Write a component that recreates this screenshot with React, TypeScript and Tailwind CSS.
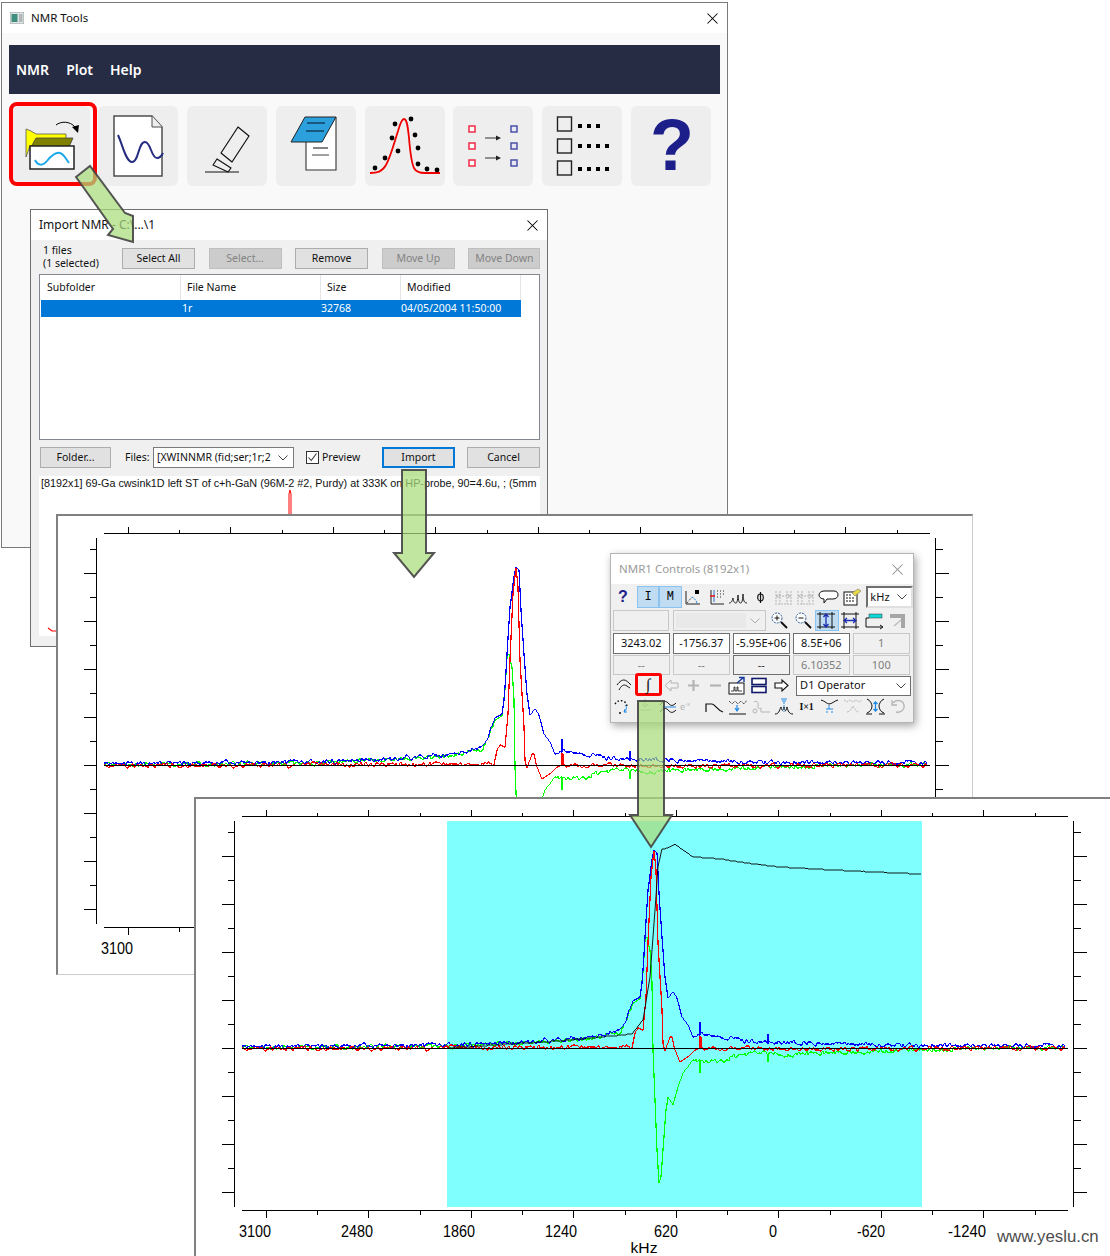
import React from "react";

type P = [number, number];

function rng(seed: number) {
  let s = seed;
  return () => {
    s = (s * 1664525 + 1013904223) % 4294967296;
    return s / 4294967296;
  };
}

function trace(pts: P[], amp: (x: number) => number, seed: number, spikes: P[] = []) {
  const r = rng(seed);
  let d = "";
  let i = 0;
  let prev = 0;
  for (let x = pts[0][0]; x <= pts[pts.length - 1][0]; x += 1) {
    while (i < pts.length - 2 && x > pts[i + 1][0]) i++;
    const [a, b] = pts[i];
    const [c, e] = pts[i + 1];
    let y = b + ((e - b) * (x - a)) / (c - a);
    const n = (r() - 0.5) * 2 * amp(x);
    prev = prev * 0.45 + n * 0.75;
    y += prev;
    const sp = spikes.find((s) => s[0] === x);
    const yy = Math.round(y);
    d += `${d ? "L" : "M"}${x - 195} ${yy - 798}`;
    if (sp) d += `L${x - 195} ${sp[1] - 798}L${x - 195} ${yy - 798}`;
  }
  return d;
}

const noisy = (x: number) => (x < 632 || x > 695 ? 2.6 : 0.2);

const shoulderA: P[] = [
  [560, 1040], [593, 1037], [610, 1032], [620, 1029], [627, 1018], [633, 1001], [640, 997], [642, 983], [643, 970],
  [645, 937], [648, 890], [652, 860], [654, 850],
];

const bluePts: P[] = [
  [242, 1047], [450, 1045], ...shoulderA,
  [657, 853], [659, 893], [662, 937], [665, 977], [668, 998], [673, 992], [677, 998], [682, 1017], [688, 1025], [693, 1037],
  [700, 1033], [727, 1038], [760, 1042], [780, 1042], [900, 1045], [1065, 1046],
];
const redPts: P[] = [
  [242, 1049], [632, 1047], [635, 1033], [638, 1028], [643, 1030], [646, 997], [648, 943], [651, 877], [654, 851],
  [656, 870], [658, 943], [662, 1010], [663, 1043], [665, 1051], [670, 1037], [672, 1037], [675, 1050], [680, 1062],
  [688, 1057], [697, 1048], [780, 1049], [1065, 1048],
];
const greenPts: P[] = [
  [242, 1048], [450, 1046], [560, 1041], [593, 1038], [610, 1033], [620, 1032], [627, 1019], [633, 1003], [640, 999],
  [643, 972], [645, 940], [647, 937], [650, 950], [652, 983], [653, 1050], [655, 1100], [657, 1150], [659, 1183],
  [661, 1177], [663, 1150], [666, 1110], [668, 1097], [673, 1105], [678, 1087], [683, 1073], [693, 1060], [700, 1062],
  [717, 1062], [740, 1055], [760, 1053], [780, 1055], [900, 1050], [1065, 1047],
];
const integralPts: P[] = [
  [447, 1048], [560, 1041], [632, 1034], [643, 1020], [650, 977], [655, 910], [658, 867], [662, 849], [668, 848],
  [675, 844], [683, 850], [693, 857], [720, 859], [747, 863], [780, 867], [850, 871], [921, 874],
];

const blueD = trace(bluePts, noisy, 11, [[700, 1022], [768, 1034]]);
const redD = trace(redPts, noisy, 23, [[700, 1036], [701, 1037]]);
const greenD = trace(greenPts, noisy, 37, [[700, 1073], [768, 1062]]);
const integralD = trace(integralPts, () => 0.15, 5);

const majorX = [71, 173.5, 276, 378.5, 481, 583.5, 686, 788.5];
const minorX = [122, 225, 327, 430, 532, 635, 737, 840];
const majorY = [58, 106, 154, 202, 250, 298, 346, 394];
const minorY = [34, 82, 130, 178, 226, 274, 322, 370];
const labels: [string, number, number][] = [
  ["3100", 60, 32], ["2480", 162, 32], ["1860", 264, 32], ["1240", 366, 32],
  ["620", 471, 24], ["0", 578, 8], ["-620", 676, 28], ["-1240", 772, 38],
];

function PlotWindow({ integrated, className }: { integrated?: boolean; className: string }) {
  return (
    <div className={`absolute w-[917px] h-[461px] bg-white overflow-hidden border-l-2 border-t-2 border-[#808080] ${className}`}>
      <svg width={915} height={459} viewBox="1 1 915 459" className="block">
        {integrated && <rect x={252} y={23} width={475} height={386} fill="#80ffff" />}
        <g stroke="#000" strokeWidth={1} shapeRendering="crispEdges" fill="none">
          <path d="M47 18.5H873M47 412.5H873M39.5 23V409M878.5 23V409" />
          {majorX.map((x) => (
            <path key={x} d={`M${x} 11.5V19M${x} 412V419.5`} />
          ))}
          {minorX.map((x) => (
            <path key={x} d={`M${x} 14.5V19M${x} 412V416.5`} />
          ))}
          {majorY.map((y) => (
            <path key={y} d={`M27 ${y}H40M879 ${y}H892`} />
          ))}
          {minorY.map((y) => (
            <path key={y} d={`M33 ${y}H40M879 ${y}H886`} />
          ))}
        </g>
        <g fill="none" strokeWidth={1.2} strokeLinejoin="round" shapeRendering="crispEdges">
          <path d={greenD} stroke="#00ff00" />
          <path d={blueD} stroke="#0000ff" />
          <path d={redD} stroke="#ff0000" />
          {integrated && <path d={integralD} stroke="#000" strokeWidth={0.9} />}
        </g>
        <path d="M47 250.5H873" stroke="#000" strokeWidth={1} shapeRendering="crispEdges" />
        <g fontFamily="'Liberation Sans',sans-serif" fontSize={16} fill="#000">
          {labels.map(([t, x, w]) => (
            <text key={t} x={x} y={439} textAnchor="middle" textLength={w} lengthAdjust="spacingAndGlyphs">
              {t}
            </text>
          ))}
          <text x={449} y={455} fontSize={15} textAnchor="middle" textLength={27} lengthAdjust="spacingAndGlyphs">
            kHz
          </text>
        </g>
      </svg>
    </div>
  );
}

function CloseX({ color = "#000", size = 11 }: { color?: string; size?: number }) {
  return (
    <svg width={size} height={size} viewBox="0 0 11 11">
      <path d="M0.5 0.5L10.5 10.5M10.5 0.5L0.5 10.5" stroke={color} strokeWidth={1.05} fill="none" />
    </svg>
  );
}

function Tile({ children }: { children: React.ReactNode }) {
  return <div className="w-20 h-20 rounded-md bg-[#eeeeee] flex items-center justify-center shrink-0">{children}</div>;
}

function S80({ children }: { children: React.ReactNode }) {
  return (
    <svg width={80} height={80} viewBox="0 0 80 80" fill="none" className="block">
      {children}
    </svg>
  );
}

const dots5: P[] = [[10, 62], [20, 52], [27, 32], [30, 18], [33, 45], [46, 13], [50, 29], [53, 42], [53, 58], [62, 63], [72, 64]];

function Tiles() {
  return (
    <div className="flex gap-[8.8px] ml-[7.5px] mt-3">
      <Tile>
        <S80>
          <path d="M16 23L21 25L26 28H56V40H20L16 51Z" fill="#ffff00" stroke="#555" strokeWidth={0.8} />
          <path d="M26 32H63L59 41H21Z" fill="#808000" stroke="#444" strokeWidth={0.8} />
          <rect x={20} y={40} width={44} height={23} fill="#fff" stroke="#222" strokeWidth={1.5} />
          <path d="M25 54C28 60 33 60 37 55C41 50 45 46 50 47C54 48 56 53 59 57" stroke="#1da8ea" strokeWidth={2} />
          <path d="M46 19C51 15 60 15 65 21" stroke="#000" strokeWidth={1} />
          <path d="M62 21L69 19L68 27Z" fill="#000" />
        </S80>
      </Tile>
      <Tile>
        <S80>
          <path d="M16 10H54L64 21V70H16Z" fill="#fff" stroke="#4d4d4d" strokeWidth={1.5} />
          <path d="M54 10V21H64" fill="#eee" stroke="#4d4d4d" strokeWidth={1} />
          <path d="M20 29C25 40 28 56 34 56C41 56 40 36 47 36C53 36 53 52 59 52C62 52 64 49 65 47" stroke="#252c80" strokeWidth={2} />
        </S80>
      </Tile>
      <Tile>
        <S80>
          <path d="M51 21L62 30L45 56L34 47Z" stroke="#111" strokeWidth={1.2} strokeLinejoin="round" />
          <path d="M30 53L44 62L41 66L26 59Z" stroke="#111" strokeWidth={1.2} strokeLinejoin="round" />
          <path d="M18 66H52" stroke="#111" strokeWidth={1.1} />
        </S80>
      </Tile>
      <Tile>
        <S80>
          <path d="M30 36V64H60V11" fill="#fff" stroke="#333" strokeWidth={1.1} />
          <path d="M29 11H60L46 36H15Z" fill="#2ba0dd" stroke="#222" strokeWidth={1} />
          <path d="M31 17H49M30 25H48" stroke="#12405f" strokeWidth={1.4} />
          <path d="M37 42H52" stroke="#333" strokeWidth={1.2} />
          <path d="M36 49H53" stroke="#777" strokeWidth={1.4} />
        </S80>
      </Tile>
      <Tile>
        <S80>
          <path d="M5 67C12 67 17 66 21 59C26 50 30 34 33 25C35 18 37 13 39 13C42 13 43 22 44 32C45 44 46 56 49 62C51 66 54 67 60 67H75" stroke="#f00000" strokeWidth={1.8} />
          {dots5.map(([x, y]) => (
            <circle key={`${x}-${y}`} cx={x} cy={y} r={2.4} fill="#000" />
          ))}
        </S80>
      </Tile>
      <Tile>
        <S80>
          {[23, 40, 57].map((y) => (
            <rect key={`r${y}`} x={16} y={y - 3} width={6} height={6} fill="#fff" stroke="#ee2a44" strokeWidth={1.5} />
          ))}
          {[23, 40, 57].map((y) => (
            <rect key={`b${y}`} x={58} y={y - 3} width={6} height={6} fill="#e8e8f5" stroke="#4a52a8" strokeWidth={1.5} />
          ))}
          <path d="M32 32H44M32 52H44" stroke="#333" strokeWidth={1.2} />
          <path d="M43 29.5L48 32L43 34.5ZM43 49.5L48 52L43 54.5Z" fill="#222" />
        </S80>
      </Tile>
      <Tile>
        <S80>
          {[11, 33, 55].map((y) => (
            <rect key={y} x={15.5} y={y} width={14} height={14} fill="#eee" stroke="#222" strokeWidth={1.4} />
          ))}
          {[38, 47, 56].map((x) => (
            <rect key={x} x={x - 2} y={18} width={4} height={4} fill="#000" />
          ))}
          {[38, 47, 56, 65].map((x) => (
            <rect key={x} x={x - 2} y={38} width={4} height={4} fill="#000" />
          ))}
          {[38, 47, 56, 65].map((x) => (
            <rect key={x} x={x - 2} y={61} width={4} height={4} fill="#000" />
          ))}
        </S80>
      </Tile>
      <Tile>
        <span className="font-['Liberation_Sans'] font-bold text-[72px] leading-none text-[#1c1f8a] -mt-[3px] ml-[2px]">?</span>
      </Tile>
    </div>
  );
}

function Btn({ children, w, off, focus }: { children: React.ReactNode; w: string; off?: boolean; focus?: boolean }) {
  const tone = off
    ? "bg-[#cccccc] border-[#bfbfbf] text-[#838383]"
    : focus
      ? "bg-[#e1e1e1] border-[#0078d7] border-2 text-[#111]"
      : "bg-[#e1e1e1] border-[#adadad] text-[#111]";
  return <div className={`h-[21px] border flex items-center justify-center pt-px text-[10.5px] shrink-0 ${w} ${tone}`}>{children}</div>;
}

function Chevron({ color = "#444" }: { color?: string }) {
  return (
    <svg width={10} height={6} viewBox="0 0 10 6" className="shrink-0">
      <path d="M0.5 0.5L5 5L9.5 0.5" stroke={color} fill="none" strokeWidth={1} />
    </svg>
  );
}

function ImportDialog() {
  return (
    <div className="absolute left-[30px] top-[209px] w-[518px] h-[438px] border border-[#6f6f6f] bg-[#f0f0f0]">
      <div className="h-[30px] bg-white flex items-center justify-between pl-2 pr-[9px]">
        <span className="text-[12px] text-[#111]">Import NMR - C:\...\1</span>
        <CloseX />
      </div>
      <div className="flex mt-2 items-center h-[21px]">
        <div className="ml-3 w-[79px] shrink-0 text-[10.5px] leading-[13px] text-[#111] -mt-1">
          <div>1 files</div>
          <div>(1 selected)</div>
        </div>
        <div className="flex gap-[13.6px]">
          <Btn w="w-[73px]">Select All</Btn>
          <Btn w="w-[73px]" off>Select...</Btn>
          <Btn w="w-[73px]">Remove</Btn>
          <Btn w="w-[73px]" off>Move Up</Btn>
          <Btn w="w-[72px]" off>Move Down</Btn>
        </div>
      </div>
      <div className="ml-2 mt-[5px] w-[501px] h-[166px] border border-[#828790] bg-white pl-px">
        <div className="flex h-[25px] text-[10.5px] text-[#111]">
          <div className="w-[140px] pl-[6px] pt-px border-r border-[#e5e5e5] h-full flex items-center">Subfolder</div>
          <div className="w-[140px] pl-[6px] pt-px border-r border-[#e5e5e5] h-full flex items-center">File Name</div>
          <div className="w-[80px] pl-[6px] pt-px border-r border-[#e5e5e5] h-full flex items-center">Size</div>
          <div className="w-[120px] pl-[6px] pt-px border-r border-[#e5e5e5] h-full flex items-center">Modified</div>
        </div>
        <div className="flex h-[17px] w-[480px] bg-[#0078d7] items-center pt-px text-[10.5px] text-white">
          <div className="w-[141px]" />
          <div className="w-[139px]">1r</div>
          <div className="w-[80px]">32768</div>
          <div>04/05/2004 11:50:00</div>
        </div>
      </div>
      <div className="flex items-center ml-[9px] mt-[7px] h-[21px]">
        <Btn w="w-[71px]">Folder...</Btn>
        <span className="ml-[14px] w-[28px] pt-px text-[10.5px] text-[#111]">Files:</span>
        <div className="w-[141px] h-[21px] border border-[#7a7a7a] bg-white flex items-center justify-between pl-[3px] pt-px pr-[5px] text-[10.5px] text-[#111] overflow-hidden whitespace-nowrap">
          <span>[XWINNMR (fid;ser;1r;2</span>
          <Chevron />
        </div>
        <svg width={13} height={13} viewBox="0 0 13 13" className="ml-3 shrink-0">
          <rect x={0.5} y={0.5} width={12} height={12} fill="#fff" stroke="#333" />
          <path d="M2.5 6.5L5.2 9.5L10.5 2.5" stroke="#333" fill="none" strokeWidth={1.1} />
        </svg>
        <span className="ml-[3px] w-[60px] pt-px text-[10.5px] text-[#111]">Preview</span>
        <Btn w="w-[73px]" focus>Import</Btn>
        <div className="ml-3">
          <Btn w="w-[73px]">Cancel</Btn>
        </div>
      </div>
      <div className="relative ml-2 mt-2 w-[501px] h-[160px] bg-white overflow-hidden">
        <div className="pl-[2px] font-['Liberation_Sans'] text-[10.8px] leading-[14px] text-[#111] whitespace-nowrap">
          [8192x1] 69-Ga cwsink1D left ST of c+h-GaN (96M-2 #2, Purdy) at 333K on HP-probe, 90=4.6u, ; (5mm
        </div>
        <svg width={501} height={160} className="absolute left-0 top-0" fill="none">
          <path d="M250 40V18L251 14L252 18V40" stroke="#f00" strokeWidth={1} />
          <path d="M9 152L13 155H17" stroke="#f00" strokeWidth={1.2} />
        </svg>
      </div>
    </div>
  );
}

function Ic({ w = "w-[22.6px]", children, box }: { w?: string; children: React.ReactNode; box?: boolean }) {
  return (
    <div className={`h-full flex items-center justify-center shrink-0 ${w} ${box ? "bg-[#bfdcf3] border border-[#8cc3ee]" : ""}`}>
      <svg width={21} height={19} viewBox="0 0 21 19" fill="none" className="block">
        {children}
      </svg>
    </div>
  );
}

function Field({ children, w, kind }: { children?: React.ReactNode; w: string; kind: "on" | "off" | "dark" }) {
  const cls =
    kind === "on"
      ? "border-[#6f6f6f] bg-white text-[#111]"
      : kind === "dark"
        ? "border-[#6f6f6f] bg-[#f0f0f0] text-[#333]"
        : "border-[#c8c8c8] bg-[#f0f0f0] text-[#7d7d7d]";
  return <div className={`h-full border text-[11px] flex items-center justify-center overflow-hidden whitespace-nowrap shrink-0 ${w} ${cls}`}>{children}</div>;
}

const G = "#b4b4b4";

function Controls() {
  return (
    <div className="absolute left-[610px] top-[553px] w-[304px] h-[170px] border border-[#b5b5b5] bg-[#f0f0f0] shadow-[2px_3px_8px_rgba(0,0,0,0.35)]">
      <div className="h-[30px] bg-white flex items-center justify-between pl-2 pr-[10px]">
        <span className="text-[11.5px] text-[#9a9a9a]">NMR1 Controls (8192x1)</span>
        <CloseX color="#8e8e8e" />
      </div>
      {/* row 1 */}
      <div className="flex h-[22px] mt-[2px] pl-px items-center">
        <div className="w-[22px] h-full flex items-center justify-center font-['Liberation_Sans'] font-bold text-[16px] text-[#1c1f8a]">?</div>
        <div className="ml-[3px] w-[22.6px] h-full bg-[#bfdcf3] border border-[#8cc3ee] flex items-center justify-center font-['Liberation_Mono'] text-[12px] text-[#000]">I</div>
        <div className="w-[22.6px] h-full bg-[#bfdcf3] border border-[#8cc3ee] flex items-center justify-center font-['Liberation_Mono'] text-[12px] text-[#000]">M</div>
        <Ic>
          <path d="M4 3V16H18" stroke="#222" />
          <path d="M5 15L10 9" stroke="#222" strokeDasharray="1 1" />
          <path d="M10 9C12 10 14 12 15 15" stroke="#1e88e5" strokeDasharray="2 1" />
          <rect x={13} y={2} width={4} height={4} fill="#000" />
        </Ic>
        <Ic>
          <path d="M6 2V16H19" stroke="#222" />
          <path d="M9 2V14" stroke="#1e6fd0" />
          <path d="M5 8H10" stroke="#e11" strokeWidth={1.5} />
          <path d="M12 3h1M15 3h1M18 3h1M12 6h1M15 6h1M18 6h1M12 9h1M15 9h1" stroke="#222" />
        </Ic>
        <Ic>
          <path d="M1 15C3 15 4 14 5 10C5.5 14 6.5 15 8 15C9 15 9.5 13 10 7C10.5 13 11 15 12.5 15C14 15 14.5 13 15 6C15.5 13 16 15 19 15" stroke="#222" />
        </Ic>
        <Ic>
          <ellipse cx={10.5} cy={9.5} rx={2.8} ry={3.5} stroke="#111" strokeWidth={1.2} />
          <path d="M10.5 4V15" stroke="#111" strokeWidth={1.2} />
        </Ic>
        <Ic>
          <path d="M3 3V14M18 3V14M3 8H18M7 6L3 8L7 10M14 6L18 8L14 10M7 3V16M14 3V16M2 16H19" stroke={G} strokeDasharray="2 1" />
        </Ic>
        <Ic>
          <path d="M3 3V14M18 3V14M3 8H18M7 6L3 8L7 10M14 6L18 8L14 10M7 3V16M14 3V16M2 16H19" stroke={G} strokeDasharray="2 1" />
        </Ic>
        <Ic>
          <path d="M6 3H16C19 3 20 5 20 7C20 9 18 11 15 11H9L6 15V11C3 11 1 9 1 7C1 5 3 3 6 3Z" stroke="#111" fill="#fff" />
        </Ic>
        <Ic>
          <rect x={3} y={4} width={13} height={13} fill="#fff" stroke="#111" />
          <path d="M5 7h6M5 10h9M5 13h9" stroke="#111" strokeDasharray="2 1" />
          <path d="M11 5L17 1L20 3L14 8Z" fill="#e8d94a" stroke="#776" strokeWidth={0.6} />
        </Ic>
        <div className="ml-[4px] w-[47px] h-[22px] border-2 border-t-[#6f6f6f] border-l-[#6f6f6f] border-r-[#e0e0e0] border-b-[#e0e0e0] bg-white flex items-center justify-between pl-[2px] pr-[4px] text-[11px] text-[#111]">
          <span>kHz</span>
          <Chevron />
        </div>
      </div>
      {/* row 2 */}
      <div className="flex h-[21px] mt-[2px] pl-[2px] items-center">
        <Field w="w-[56px]" kind="off" />
        <div className="ml-1 w-[93px] h-full border border-[#c8c8c8] bg-[#f0f0f0] flex items-center justify-between p-[2px] pr-[5px]">
          <div className="w-[70px] h-full bg-[#e9e9e9]" />
          <Chevron color="#aaa" />
        </div>
        <div className="ml-[2px] flex h-full">
          <Ic w="w-[23.5px]">
            <circle cx={8} cy={7} r={5} fill="#fff" stroke="#2b5d9a" strokeDasharray="2 1" />
            <path d="M5.5 7H10.5M8 4.5V9.5" stroke="#111" />
            <path d="M12 11L18 17" stroke="#111" strokeWidth={2} />
          </Ic>
          <Ic w="w-[23.5px]">
            <circle cx={8} cy={7} r={5} fill="#fff" stroke="#2b5d9a" strokeDasharray="2 1" />
            <path d="M5.5 7H10.5" stroke="#111" />
            <path d="M12 11L18 17" stroke="#111" strokeWidth={2} />
          </Ic>
          <Ic w="w-[23.5px]" box>
            <path d="M4 1V18M16 1V18M1 3H19M1 16H19" stroke="#111" />
            <path d="M10 3V16M7.5 6L10 3L12.5 6M7.5 13L10 16L12.5 13" stroke="#1a2cb0" strokeWidth={1.3} />
          </Ic>
          <Ic w="w-[23.5px]">
            <path d="M4 1V18M16 1V18M1 3H19M1 16H19" stroke="#111" />
            <path d="M4 9.5H16M7 7L4 9.5L7 12M13 7L16 9.5L13 12" stroke="#1a2cb0" strokeWidth={1.3} />
          </Ic>
          <Ic w="w-[23.5px]">
            <rect x={6} y={3} width={13} height={4} fill="#10d8d8" stroke="#333" strokeWidth={0.5} />
            <path d="M3 7V16H19" stroke="#111" />
            <path d="M3 7H6" stroke="#111" />
            <path d="M17 14L20 16L17 18" stroke="#111" />
          </Ic>
          <Ic w="w-[23.5px]">
            <path d="M3 3H18V17H14V7H3Z" fill="#a6a6a6" />
            <path d="M7 15L14 9" stroke="#bdbdbd" strokeWidth={1.5} />
          </Ic>
        </div>
      </div>
      {/* row 3 */}
      <div className="flex h-[21px] mt-[2px] pl-[2px] gap-[3.5px]">
        <Field w="w-[56.5px]" kind="on">3243.02</Field>
        <Field w="w-[56.5px]" kind="on">-1756.37</Field>
        <Field w="w-[56.5px]" kind="on">-5.95E+06</Field>
        <Field w="w-[56.5px]" kind="on">8.5E+06</Field>
        <Field w="w-[56.5px]" kind="off">1</Field>
      </div>
      {/* row 4 */}
      <div className="flex h-[20px] mt-px pl-[2px] gap-[3.5px]">
        <Field w="w-[56.5px]" kind="off">--</Field>
        <Field w="w-[56.5px]" kind="off">--</Field>
        <Field w="w-[56.5px]" kind="dark">--</Field>
        <Field w="w-[56.5px]" kind="off">6.10352</Field>
        <Field w="w-[56.5px]" kind="off">100</Field>
      </div>
      {/* row 5 */}
      <div className="flex h-[21px] pl-px items-center">
        <Ic w="w-[24px]">
          <path d="M3 9C6 5 8 4 10 4C12 4 14 6 17 9" stroke="#111" />
          <path d="M5 14C7 10 9 9 10.5 9C12 9 14 11 16 12" stroke="#111" />
        </Ic>
        <div className="w-[24px] h-[23px] flex items-center justify-center shrink-0 -mt-[2px]">
          <span className="w-[27px] h-[23px] shrink-0 border-[3px] border-[#ff0000] rounded-[3px] bg-[#f0f0f0] flex items-center justify-center font-['Liberation_Serif'] text-[16px] leading-none text-[#111]">∫</span>
        </div>
        <Ic w="w-[22px]">
          <path d="M4 9.5L10 4V7H17V12H10V15Z" stroke={G} fill="#f0f0f0" />
        </Ic>
        <Ic w="w-[22px]">
          <path d="M10.5 4V15M5 9.5H16" stroke={G} strokeWidth={2.2} />
        </Ic>
        <Ic w="w-[22px]">
          <path d="M5 9.5H16" stroke={G} strokeWidth={2.2} />
        </Ic>
        <Ic w="w-[22px]">
          <rect x={2} y={7} width={15} height={11} fill="#fff" stroke="#111" />
          <path d="M4 15H7V11H8V15H10V11H11V15H15" stroke="#111" strokeWidth={0.8} />
          <path d="M10 7L16 2M12 1.5H17V6" stroke="#173a9a" strokeWidth={1.4} />
        </Ic>
        <Ic w="w-[22px]">
          <rect x={3} y={2.5} width={14} height={6} fill="#fff" stroke="#111a6a" strokeWidth={1.6} />
          <rect x={3} y={10.5} width={14} height={6} fill="#fff" stroke="#111a6a" strokeWidth={1.6} />
        </Ic>
        <Ic w="w-[22px]">
          <path d="M17 9.5L11 4V7H4V12H11V15Z" stroke="#111" fill="#fff" strokeWidth={1.1} />
        </Ic>
        <div className="ml-1 w-[115px] h-[20px] border border-[#6f6f6f] bg-white flex items-center justify-between pl-[3px] pr-1 text-[11px] text-[#111] tracking-[0.1px]">
          <span>D1 Operator</span>
          <Chevron />
        </div>
      </div>
      {/* row 6 */}
      <div className="flex h-[21px] items-center">
        <Ic w="w-[23px]">
          <path d="M3 7C5 4 8 3 11 4C14 5 15 8 15 10" stroke="#111" strokeDasharray="1.5 2" strokeWidth={1.5} />
          <path d="M13 8C15 10 15 13 12 15M12 15L13 12M12 15L15 15" stroke="#1e88e5" />
          <path d="M7 16h2" stroke="#111" strokeWidth={1.5} />
        </Ic>
        <Ic w="w-[23px]">
          <path d="M10 2V9M7 7L10 10L13 7M5 13H16" stroke={G} />
        </Ic>
        <Ic w="w-[23px]">
          <path d="M2 8C5 4 8 3 11 7C13 9 15 9 18 6M2 15C5 11 8 10 11 14C13 16 15 16 18 13" stroke="#111" />
          <path d="M4 10H18" stroke="#1e88e5" />
        </Ic>
        <div className="w-[23px] h-full flex items-center justify-start shrink-0 text-[9px] text-[#b4b4b4]">
          e<sup className="text-[6px]">-x</sup>
        </div>
        <Ic w="w-[23px]">
          <path d="M2 15V7H8C11 7 13 13 19 15" stroke="#111" strokeWidth={1.2} />
        </Ic>
        <Ic w="w-[23px]">
          <path d="M2 4L5 7L8 4L11 7L14 4L17 7L20 3" stroke="#111" strokeDasharray="1 1" />
          <path d="M10 8V13M8 11L10 14L12 11" stroke="#1e88e5" strokeWidth={1.2} />
          <path d="M2 17H19" stroke="#111" />
        </Ic>
        <Ic w="w-[23px]">
          <path d="M4 5C7 3 9 6 8 9C7 11 9 12 11 11V15H20" stroke={G} />
          <circle cx={5} cy={14} r={2} stroke={G} />
        </Ic>
        <Ic w="w-[23px]">
          <path d="M2 17C6 17 6 14 8 10C9 14 10 15 11 10C12 15 13 15 14 10C15 14 16 17 20 17" stroke="#111" />
          <path d="M8 2H14M9 4h4" stroke="#1e88e5" />
          <path d="M11 5V15" stroke="#1e88e5" strokeDasharray="2 1" />
        </Ic>
        <div className="w-[23px] h-full flex items-center justify-center shrink-0 font-['Liberation_Serif'] font-bold text-[10px] tracking-[-0.2px] text-[#111]">I×1</div>
        <Ic w="w-[23px]">
          <path d="M2 3C6 4 8 7 10 7C13 7 15 4 19 3" stroke="#111" />
          <path d="M10 8V12M7 12H14M7 15H9M12 15H14" stroke="#1e88e5" />
        </Ic>
        <Ic w="w-[23px]">
          <path d="M2 3L5 5L8 3L11 5L14 3L17 5L20 3M5 15C8 15 9 12 11 9C13 12 14 15 17 15" stroke={G} strokeDasharray="2 1" />
        </Ic>
        <Ic w="w-[23px]">
          <path d="M2 2C5 3 7 7 7 9C7 12 5 15 2 16M19 2C16 3 14 7 14 9C14 12 16 15 19 16M1 17H7M14 17H20" stroke="#111" />
          <path d="M10.5 5V14M8.5 7L10.5 5L12.5 7M8.5 12L10.5 14L12.5 12" stroke="#1e88e5" strokeWidth={1.3} />
        </Ic>
        <Ic w="w-[23px]">
          <path d="M5 6C8 2 15 3 16 8C17 13 12 16 8 15" stroke={G} strokeWidth={1.3} />
          <path d="M4 3V8H9" stroke={G} strokeWidth={1.3} />
        </Ic>
      </div>
    </div>
  );
}

const arrowProps = { fill: "#a9dd7c", fillOpacity: 0.72, stroke: "#444", strokeOpacity: 0.9, strokeWidth: 2, strokeLinejoin: "miter" as const };

export default function App() {
  return (
    <div className="relative w-[1110px] h-[1256px] bg-white overflow-hidden font-['Noto_Sans',sans-serif]">
      {/* main window */}
      <div className="absolute left-px top-[2px] w-[727px] h-[546px] border border-[#7a7a7a] bg-[#f9f9f9]">
        <div className="h-[30px] bg-white flex items-center justify-between pl-[8px] pr-[9px]">
          <div className="flex items-center gap-[7px]">
            <svg width={14} height={12} viewBox="0 0 14 12">
              <rect x={0} y={0} width={14} height={12} fill="#dfe3e3" stroke="#8c9696" strokeWidth={0.8} />
              <rect x={1.5} y={2} width={6} height={8} fill="#3f8f7f" />
              <rect x={9} y={2} width={3.5} height={8} fill="#b0b8b8" />
            </svg>
            <span className="text-[11.5px] text-[#111]">NMR Tools</span>
          </div>
          <CloseX />
        </div>
        <div className="ml-[7px] mt-3 w-[711px] h-[49px] bg-[#262c44] flex items-center gap-[17px] pl-[7px] text-white font-semibold text-[14px]">
          <span>NMR</span>
          <span>Plot</span>
          <span>Help</span>
        </div>
        <Tiles />
      </div>
      {/* red highlight on the open tile */}
      <div className="absolute left-[9px] top-[102px] w-[88px] h-[84px] border-4 border-[#ff0000] rounded-lg" />

      <ImportDialog />
      <PlotWindow className="left-[56px] top-[514px] border-r border-b border-r-[#cccccc] border-b-[#cccccc]" />
      <Controls />
      <PlotWindow integrated className="left-[194px] top-[797px]" />

      <span className="absolute left-[997px] top-[1224px] text-[16.8px] font-['Liberation_Sans'] text-[#4d4d4d]">www.yeslu.cn</span>

      {/* annotation arrows */}
      <svg width={1110} height={1256} className="absolute left-0 top-0 pointer-events-none">
        <polygon points="76,177 90,166 125,213 133,216 133,242 108,235 113,229" {...arrowProps} />
        <polygon points="402,470 426,470 426,553 434,553 414,577 394,553 402,553" {...arrowProps} />
        <polygon points="638,701 664,701 664,815 672,815 651,847 630,815 638,815" {...arrowProps} />
      </svg>
    </div>
  );
}
